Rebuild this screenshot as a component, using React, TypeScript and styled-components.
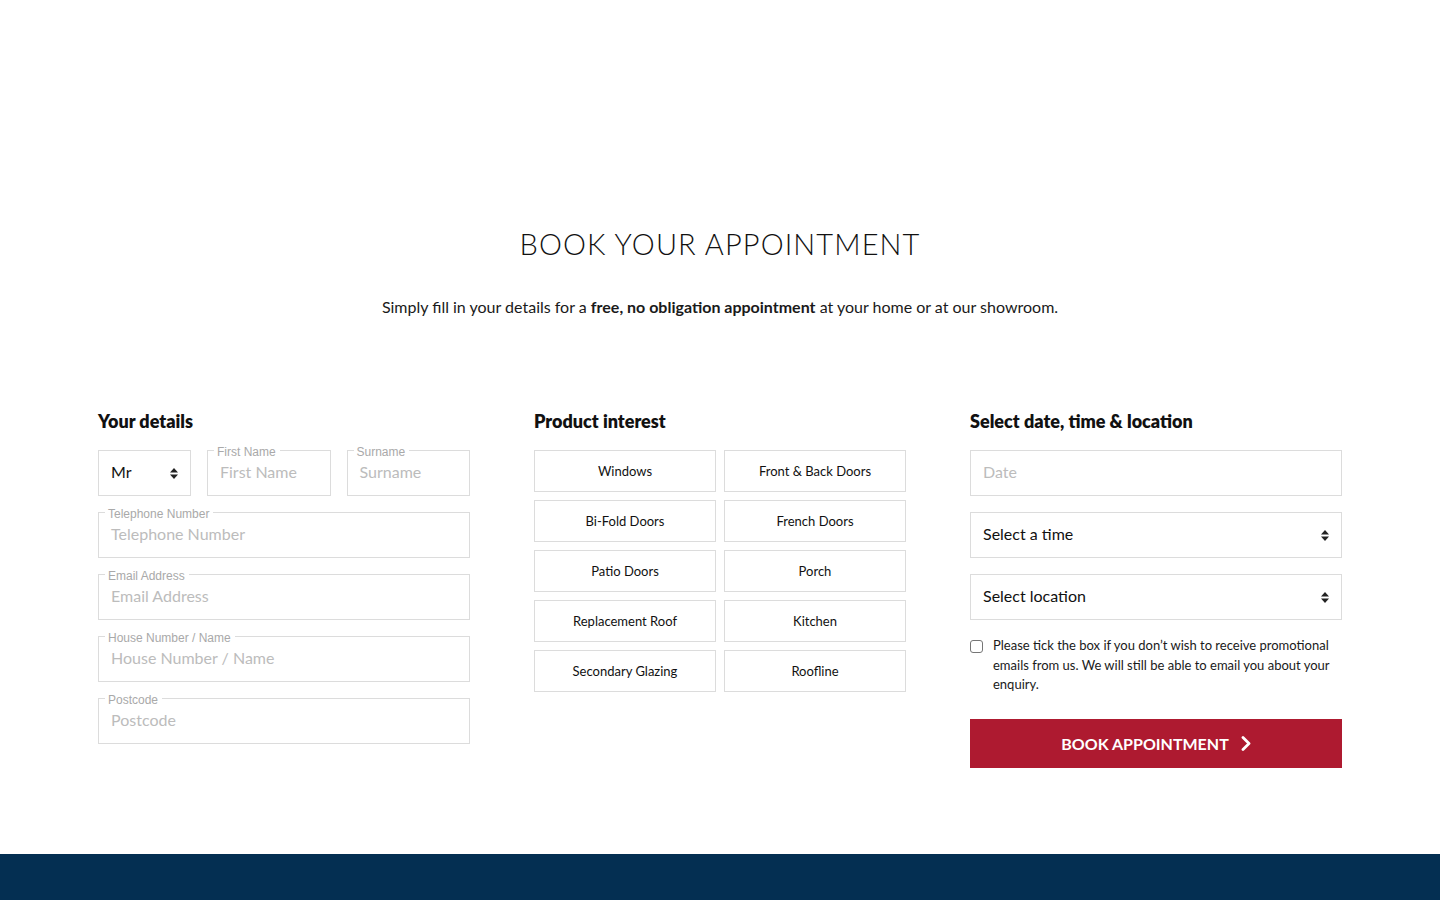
import React from "react";
import styled, { createGlobalStyle } from "styled-components";

const GlobalStyle = createGlobalStyle`
  html, body {
    margin: 0;
    padding: 0;
    background: #fff;
  }
  body {
    font-family: "Lato", "Liberation Sans", Arial, sans-serif;
    color: #111;
  }
  * {
    box-sizing: border-box;
  }
`;

const products = [
  "Windows",
  "Front & Back Doors",
  "Bi-Fold Doors",
  "French Doors",
  "Patio Doors",
  "Porch",
  "Replacement Roof",
  "Kitchen",
  "Secondary Glazing",
  "Roofline",
];

const detailFields = [
  "Telephone Number",
  "Email Address",
  "House Number / Name",
  "Postcode",
];

function Carets() {
  return (
    <svg width="8" height="11" viewBox="0 0 8 11">
      <path d="M4 0 L8 4.4 H0 Z" fill="#222" />
      <path d="M0 6.6 H8 L4 11 Z" fill="#222" />
    </svg>
  );
}

function Chevron() {
  return (
    <svg width="10" height="15" viewBox="0 0 10 15">
      <path
        d="M2 1.5 L8 7.5 L2 13.5"
        fill="none"
        stroke="#fff"
        strokeWidth="2.8"
        strokeLinecap="round"
        strokeLinejoin="round"
      />
    </svg>
  );
}

function FloatField({ label }: { label: string }) {
  return (
    <FieldBox>
      <FloatLabel>{label}</FloatLabel>
      <Placeholder>{label}</Placeholder>
    </FieldBox>
  );
}

function App() {
  return (
    <Page>
      <GlobalStyle />
      <Section>
        <Title>BOOK YOUR APPOINTMENT</Title>
        <Intro>
          Simply fill in your details for a{" "}
          <strong>free, no obligation appointment</strong> at your home or at
          our showroom.
        </Intro>
        <Columns>
          <Column>
            <Heading>Your details</Heading>
            <NameRow>
              <SelectBox>
                <span>Mr</span>
                <Carets />
              </SelectBox>
              <FloatField label="First Name" />
              <FloatField label="Surname" />
            </NameRow>
            {detailFields.map((f) => (
              <FloatField key={f} label={f} />
            ))}
          </Column>

          <Column>
            <Heading>Product interest</Heading>
            <ProductGrid>
              {products.map((p) => (
                <ProductButton key={p}>{p}</ProductButton>
              ))}
            </ProductGrid>
          </Column>

          <Column>
            <Heading>Select date, time &amp; location</Heading>
            <FieldBox>
              <Placeholder>Date</Placeholder>
            </FieldBox>
            <SelectBox>
              <span>Select a time</span>
              <Carets />
            </SelectBox>
            <SelectBox>
              <span>Select location</span>
              <Carets />
            </SelectBox>
            <Consent>
              <Tick />
              <p>
                Please tick the box if you don’t wish to receive promotional
                emails from us. We will still be able to email you about your
                enquiry.
              </p>
            </Consent>
            <SubmitButton>
              BOOK APPOINTMENT
              <Chevron />
            </SubmitButton>
          </Column>
        </Columns>
      </Section>
      <Footer />
    </Page>
  );
}

const Page = styled.div`
  display: flex;
  flex-direction: column;
`;

const Section = styled.section`
  width: 1244px;
  margin: 0 auto;
  padding: 228px 0 86px;
  display: flex;
  flex-direction: column;
  align-items: center;
`;

const Title = styled.h1`
  margin: 0;
  font-size: 29px;
  font-weight: 300;
  letter-spacing: 1.1px;
  line-height: 32px;
  color: #111;
`;

const Intro = styled.p`
  margin: 37px 0 0;
  font-size: 16px;
  line-height: 20px;
  color: #1a1a1a;

  strong {
    font-weight: 700;
  }
`;

const Columns = styled.div`
  width: 100%;
  margin-top: 93px;
  display: grid;
  grid-template-columns: repeat(3, 372px);
  column-gap: 64px;
  align-items: start;
`;

const Column = styled.div`
  display: flex;
  flex-direction: column;
  gap: 16px;
`;

const Heading = styled.h2`
  margin: 0 0 2px;
  font-size: 18px;
  font-weight: 800;
  line-height: 22px;
  color: #111;
`;

const NameRow = styled.div`
  display: grid;
  grid-template-columns: 93px 1fr 1fr;
  gap: 16px;
`;

const FieldBox = styled.div`
  position: relative;
  height: 46px;
  border: 1px solid #dcdcdc;
  display: flex;
  align-items: center;
  padding: 0 12px 3px;
`;

const FloatLabel = styled.span`
  position: absolute;
  top: -5px;
  left: 6px;
  padding: 0 4px 0 3px;
  background: #fff;
  font-family: "Liberation Sans", Arial, sans-serif;
  font-size: 12px;
  line-height: 12px;
  color: #a9a9a9;
`;

const Placeholder = styled.span`
  font-size: 16px;
  color: #bcbcbc;
  white-space: nowrap;
`;

const SelectBox = styled.div`
  height: 46px;
  border: 1px solid #dcdcdc;
  display: flex;
  align-items: center;
  justify-content: space-between;
  padding: 0 12px 3px 12px;
  font-size: 16px;
  color: #111;

  svg {
    margin-top: 3px;
  }
`;

const ProductGrid = styled.div`
  display: grid;
  grid-template-columns: 1fr 1fr;
  gap: 8px 8px;
`;

const ProductButton = styled.button`
  height: 42px;
  border: 1px solid #dcdcdc;
  background: #fff;
  font-family: "Lato", "Liberation Sans", Arial, sans-serif;
  font-size: 13px;
  color: #111;
  cursor: pointer;
`;

const Consent = styled.label`
  display: flex;
  gap: 10px;
  align-items: flex-start;

  p {
    margin: 0;
    font-size: 13px;
    line-height: 19.5px;
    color: #1a1a1a;
  }
`;

const Tick = styled.span`
  flex: none;
  width: 13px;
  height: 13px;
  margin-top: 4px;
  border: 1px solid #767676;
  border-radius: 3px;
  background: #fff;
`;

const SubmitButton = styled.button`
  margin-top: 8px;
  height: 49px;
  border: none;
  background: #ae1a30;
  color: #fff;
  font-family: "Lato", "Liberation Sans", Arial, sans-serif;
  font-size: 16px;
  font-weight: 700;
  display: flex;
  align-items: center;
  justify-content: center;
  gap: 12px;
  cursor: pointer;
`;

const Footer = styled.footer`
  height: 60px;
  background: #042f52;
`;

export default App;
